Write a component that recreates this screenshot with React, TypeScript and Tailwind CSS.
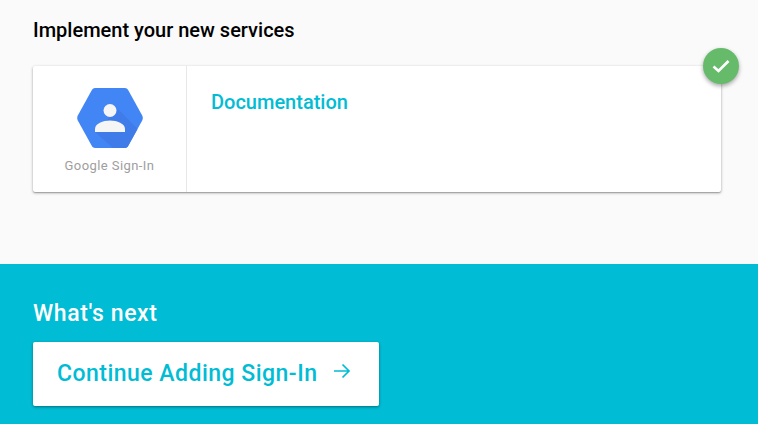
function SignInLogo() {
  return (
    <svg width="66" height="60" viewBox="0 0 66 60" className="block">
      <path d="M15 1.8 Q16 0 18 0 L48 0 Q50 0 51 1.8 L65.2 27.5 Q66.4 30 65.2 32.5 L51 58.2 Q50 60 48 60 L18 60 Q16 60 15 58.2 L0.8 32.5 Q-0.4 30 0.8 27.5 Z" fill="#4285F4" />
      <path d="M41 21 L60.5 41 L51 58.2 Q50 60 48 60 L36 60 L18 44 Z" fill="#3F7CE9" />
      <circle cx="33" cy="22.5" r="6.5" fill="#F5F5F5" />
      <path d="M18 44 L18 41 C18 35.5 26 32.5 33 32.5 C40 32.5 48 35.5 48 41 L48 44 Z" fill="#F5F5F5" />
    </svg>
  )
}

export default function App() {
  return (
    <div className="w-[758px] h-[424px] overflow-hidden bg-[#fafafa] font-['Roboto',sans-serif]">
      <section className="h-[264px] pt-[18px] px-[33px]">
        <h2 className="text-[20px] leading-[24px] font-medium text-black">Implement your new services</h2>
        <div className="relative mt-[24px] w-[688px] h-[126px] bg-white rounded-[2px] shadow-[0_1px_3px_rgba(0,0,0,0.35),0_1px_1px_rgba(0,0,0,0.15)] flex">
          <div className="w-[154px] border-r border-[#e8e8e8] flex flex-col items-center pt-[22px]">
            <SignInLogo />
            <span className="mt-[9px] text-[13px] leading-[18px] text-[#9e9e9e] tracking-[0.42px]">Google Sign-In</span>
          </div>
          <div className="pl-[24px] pt-[24px]">
            <a className="text-[20px] leading-[24px] font-medium text-[#00bcd4]">Documentation</a>
          </div>
          <div className="absolute -top-[18px] -right-[18px] w-[36px] h-[36px] rounded-full bg-[#66bb6a] shadow-[0_2px_4px_rgba(0,0,0,0.35)] flex items-center justify-center">
            <svg width="18" height="14" viewBox="0 0 18 14">
              <path d="M1.5 7.5 L6.5 12 L16.5 2" fill="none" stroke="#fff" strokeWidth="2.6" />
            </svg>
          </div>
        </div>
      </section>
      <section className="h-[160px] bg-[#00bcd4] px-[33px] pt-[37px]">
        <h2 className="text-[23px] leading-[26px] font-medium text-white tracking-[0.6px]">What's next</h2>
        <button className="mt-[15px] w-[346px] h-[64px] bg-white rounded-[2px] shadow-[0_1px_3px_rgba(0,0,0,0.4)] pl-[24px] flex items-center text-[#00bcd4]">
          <span className="text-[23px] leading-[28px] font-medium tracking-[0.48px]">Continue Adding Sign-In</span>
          <svg width="18" height="16" viewBox="0 0 18 16" className="ml-[16px] -mt-[6px]">
            <path d="M1 8 H16 M9.5 1.5 L16 8 L9.5 14.5" fill="none" stroke="currentColor" strokeWidth="1.7" />
          </svg>
        </button>
      </section>
    </div>
  )
}
